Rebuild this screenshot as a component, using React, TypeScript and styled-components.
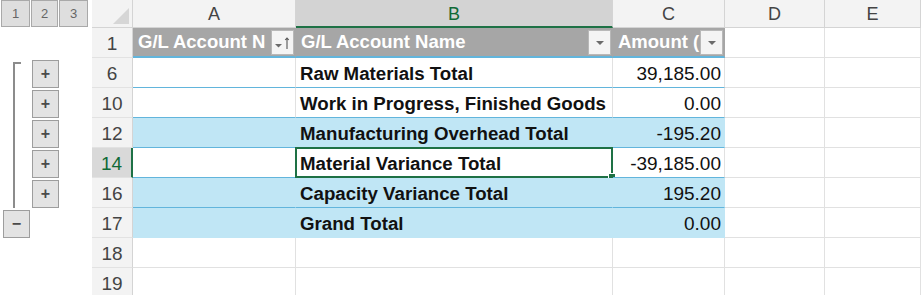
import React from 'react';
import styled, { createGlobalStyle, css } from 'styled-components';

const GlobalStyle = createGlobalStyle`
	html, body {
		margin: 0;
		padding: 0;
		background: #ffffff;
		overflow: hidden;
	}
	body {
		font-family: 'Liberation Sans', Arial, sans-serif;
	}
`;

const GRID = '#e1e1e1';
const LINE = '#62b5dc';
const BAND = '#c0e6f5';
const GREEN = '#1e7145';

const ROWS = '28px repeat(9, 30px)';

const Page = styled.div`
	display: flex;
	width: 921px;
	height: 295px;
	overflow: hidden;
`;

const Outline = styled.div`
	display: grid;
	grid-template-columns: 31px 28px 33px;
	grid-template-rows: ${ROWS};
	width: 92px;
	flex: none;
`;

const LevelButton = styled.div<{ $col: number }>`
	grid-row: 1;
	grid-column: ${p => p.$col};
	display: flex;
	align-items: center;
	justify-content: center;
	margin: 0 ${p => (p.$col === 3 ? 4 : 1)}px 1px ${p => (p.$col === 1 ? 1 : 0)}px;
	background: #dedede;
	border: 1px solid #a9a9a9;
	color: #666;
	font-size: 13px;
`;

const Bracket = styled.div`
	grid-column: 1;
	grid-row: 3 / 8;
	margin: 4px 0 0 13px;
	width: 6px;
	border-left: 2px solid #8c8c8c;
	border-top: 2px solid #8c8c8c;
`;

const OutlineButton = styled.div<{ $row: number; $col: number }>`
	grid-row: ${p => p.$row};
	grid-column: ${p => p.$col};
	display: flex;
	align-items: center;
	justify-content: center;
	margin: 2px ${p => (p.$col === 1 ? 1 : 0)}px 0 ${p => (p.$col === 1 ? 3 : 1)}px;
	background: #e3e3e3;
	border: 1px solid #9d9d9d;
	color: #4a4a4a;
	font-size: 16px;
	font-weight: bold;
	line-height: 1;
`;

const Sheet = styled.div`
	display: grid;
	grid-template-columns: 41px 163px 317px 112px 100px 1fr;
	grid-template-rows: ${ROWS};
	flex: 1;
	min-width: 0;
`;

const Corner = styled.div`
	background: #f3f3f3;
	border-right: 1px solid #d4d4d4;
	border-bottom: 1px solid #d4d4d4;
	display: flex;
	align-items: flex-end;
	justify-content: flex-end;
	padding: 0 3px 3px 0;
`;

const ColHead = styled.div<{ $active?: boolean }>`
	display: flex;
	align-items: center;
	justify-content: center;
	padding-top: 2px;
	font-size: 18px;
	color: ${p => (p.$active ? '#0f6a36' : '#444')};
	background: ${p => (p.$active ? '#d3d3d3' : '#f3f3f3')};
	border-right: 1px solid #d4d4d4;
	border-bottom: ${p => (p.$active ? `2px solid ${GREEN}` : '1px solid #d4d4d4')};
`;

const RowHead = styled.div<{ $active?: boolean }>`
	display: flex;
	align-items: center;
	justify-content: center;
	padding-top: 2px;
	font-size: 19px;
	color: ${p => (p.$active ? '#0f6a36' : '#444')};
	background: ${p => (p.$active ? '#d9d9d9' : '#f3f3f3')};
	border-right: ${p => (p.$active ? `2px solid ${GREEN}` : '1px solid #d4d4d4')};
	border-bottom: 1px solid #e2e2e2;
`;

type Tone = 'head' | 'band' | 'plain' | 'empty';

const Cell = styled.div<{ $tone: Tone; $num?: boolean; $bold?: boolean; $last?: boolean }>`
	position: relative;
	display: flex;
	align-items: center;
	justify-content: ${p => (p.$num ? 'flex-end' : 'flex-start')};
	padding: 2px ${p => (p.$num ? 3 : 4)}px 0;
	font-size: ${p => (p.$num ? 19 : 18.7)}px;
	color: #111;
	font-weight: ${p => (p.$bold ? 'bold' : 'normal')};
	white-space: nowrap;
	min-width: 0;
	border-right: 1px solid ${GRID};
	border-bottom: 1px solid ${GRID};

	${p =>
		p.$tone === 'head' &&
		css`
			background: #a6a6a6;
			color: #fff;
			font-weight: bold;
			border-right-color: #a6a6a6;
			border-bottom: 2px solid ${LINE};
			padding: 0 1px 0 5px;
			font-size: 18.5px;
		`}
	${p =>
		p.$tone === 'band' &&
		css`
			background: ${BAND};
			border-right-color: ${BAND};
			border-bottom: 1px solid ${p.$last ? BAND : LINE};
		`}
	${p =>
		p.$tone === 'plain' &&
		css`
			border-bottom: 1px solid ${LINE};
		`}
`;

const HeadLabel = styled.span`
	flex: 1;
	overflow: hidden;
	white-space: nowrap;
`;

const FilterButton = styled.div`
	flex: none;
	width: 23px;
	height: 25px;
	margin-top: 1px;
	display: flex;
	align-items: center;
	justify-content: center;
	background: #f4f4f4;
	border: 1px solid #b8b8b8;
	box-sizing: border-box;
`;

const Selection = styled.div`
	position: absolute;
	inset: -1px -1px -1px -1px;
	border: 2px solid ${GREEN};
	pointer-events: none;

	&:after {
		content: '';
		position: absolute;
		right: -5px;
		bottom: -5px;
		width: 6px;
		height: 6px;
		background: ${GREEN};
		border: 1px solid #fff;
	}
`;

const Dropdown = () => (
	<svg width="10" height="6" viewBox="0 0 10 6">
		<path d="M1 1h8L5 5z" fill="#6b6b6b" />
	</svg>
);

const SortDropdown = () => (
	<svg width="16" height="14" viewBox="0 0 16 14">
		<path d="M0 8h7L3.5 11.5z" fill="#6b6b6b" />
		<path d="M12 2v11M10.2 4L12 2l1.8 2" stroke="#555" strokeWidth="1.1" fill="none" />
	</svg>
);

interface Row {
	n: number;
	name?: string;
	amount?: string;
	tone: Tone;
	active?: boolean;
	last?: boolean;
}

const rows: Row[] = [
	{ n: 6, name: 'Raw Materials Total', amount: '39,185.00', tone: 'plain' },
	{ n: 10, name: 'Work in Progress, Finished Goods', amount: '0.00', tone: 'plain' },
	{ n: 12, name: 'Manufacturing Overhead Total', amount: '-195.20', tone: 'band' },
	{ n: 14, name: 'Material Variance Total', amount: '-39,185.00', tone: 'plain', active: true },
	{ n: 16, name: 'Capacity Variance Total', amount: '195.20', tone: 'band' },
	{ n: 17, name: 'Grand Total', amount: '0.00', tone: 'band', last: true },
	{ n: 18, tone: 'empty' },
	{ n: 19, tone: 'empty' },
];

const columns = ['A', 'B', 'C', 'D', 'E'];

const App = () => (
	<Page>
		<GlobalStyle />
		<Outline>
			<LevelButton $col={1}>1</LevelButton>
			<LevelButton $col={2}>2</LevelButton>
			<LevelButton $col={3}>3</LevelButton>
			<Bracket />
			{[3, 4, 5, 6, 7].map(r => (
				<OutlineButton key={r} $row={r} $col={2}>
					+
				</OutlineButton>
			))}
			<OutlineButton $row={8} $col={1}>
				−
			</OutlineButton>
		</Outline>

		<Sheet>
			<Corner>
				<svg width="16" height="16" viewBox="0 0 16 16">
					<path d="M16 0v16H0z" fill="#d6d6d6" />
				</svg>
			</Corner>
			{columns.map(c => (
				<ColHead key={c} $active={c === 'B'}>
					{c}
				</ColHead>
			))}

			<RowHead>1</RowHead>
			<Cell $tone="head">
				<HeadLabel>G/L Account N</HeadLabel>
				<FilterButton>
					<SortDropdown />
				</FilterButton>
			</Cell>
			<Cell $tone="head">
				<HeadLabel>G/L Account Name</HeadLabel>
				<FilterButton>
					<Dropdown />
				</FilterButton>
			</Cell>
			<Cell $tone="head">
				<HeadLabel>Amount (</HeadLabel>
				<FilterButton>
					<Dropdown />
				</FilterButton>
			</Cell>
			<Cell $tone="empty" />
			<Cell $tone="empty" />

			{rows.map(r => (
				<React.Fragment key={r.n}>
					<RowHead $active={r.active}>{r.n}</RowHead>
					<Cell $tone={r.tone} $last={r.last} />
					<Cell $tone={r.tone} $last={r.last} $bold>
						{r.name}
						{r.active && <Selection />}
					</Cell>
					<Cell $tone={r.tone} $last={r.last} $num>
						{r.amount}
					</Cell>
					<Cell $tone="empty" />
					<Cell $tone="empty" />
				</React.Fragment>
			))}
		</Sheet>
	</Page>
);

export default App;
